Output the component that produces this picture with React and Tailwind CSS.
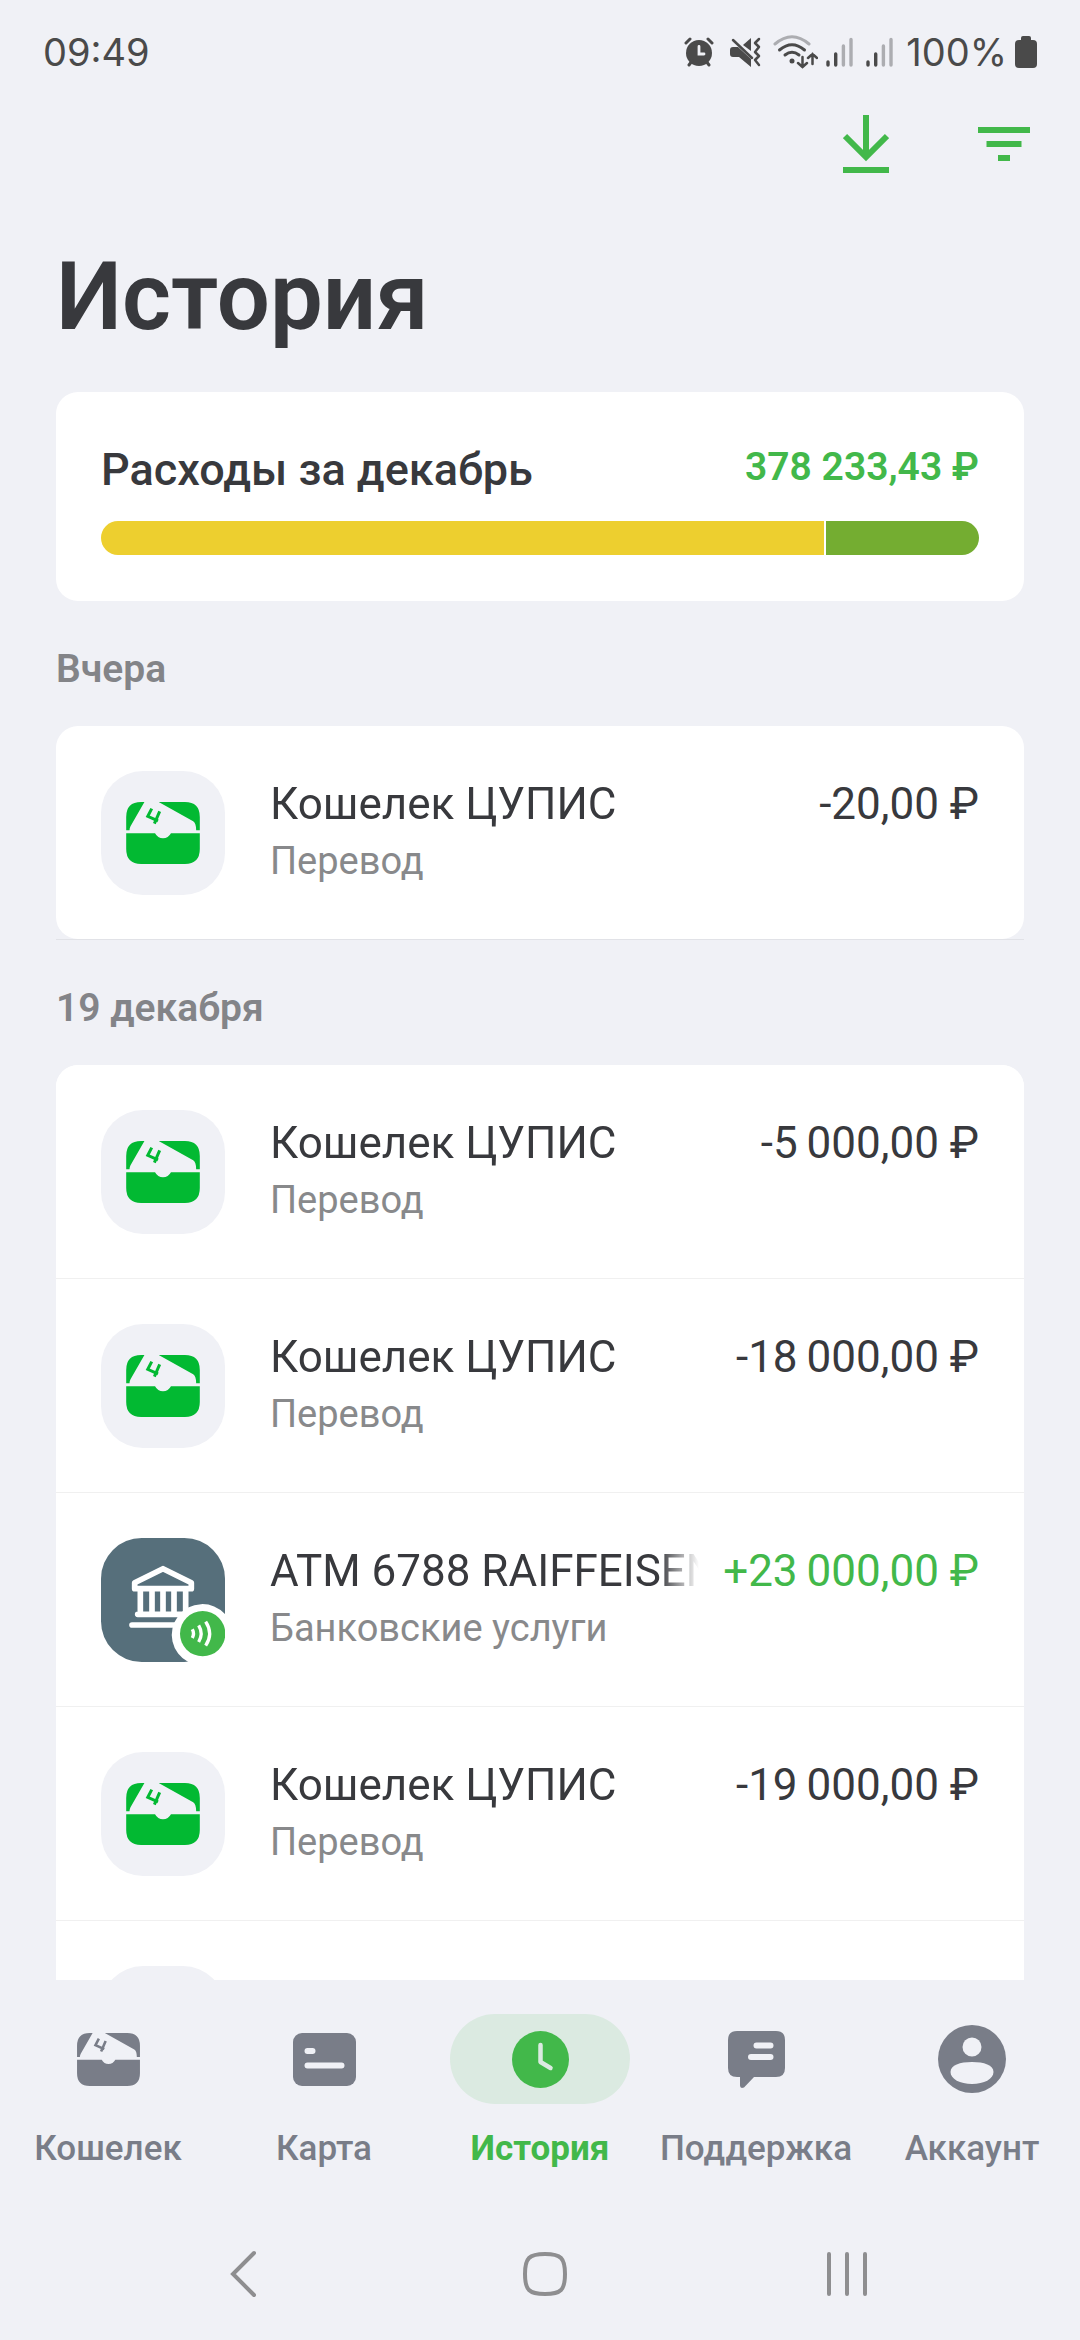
import clsx from 'clsx';

const categories = [
  { id: 'transfers', amount: 723, color: 'bg-[#edcf2f]' },
  { id: 'other', amount: 153, color: 'bg-[#74ad31]' },
];

// Thousands are separated with a thin space (\u2009)
const groups = [
  {
    label: 'Вчера',
    items: [{ id: 1, title: 'Кошелек ЦУПИС', category: 'Перевод', amount: '-20,00 ₽' }],
  },
  {
    label: '19 декабря',
    hasMore: true,
    items: [
      { id: 2, title: 'Кошелек ЦУПИС', category: 'Перевод', amount: '-5\u2009000,00 ₽' },
      { id: 3, title: 'Кошелек ЦУПИС', category: 'Перевод', amount: '-18\u2009000,00 ₽' },
      {
        id: 4,
        title: 'ATM 6788 RAIFFEISEN',
        category: 'Банковские услуги',
        amount: '+23\u2009000,00 ₽',
        type: 'bank',
        income: true,
      },
      { id: 5, title: 'Кошелек ЦУПИС', category: 'Перевод', amount: '-19\u2009000,00 ₽' },
    ],
  },
];

const AlarmIcon = () => (
  <svg className="w-[30px] h-[30px]" viewBox="0 0 30 30" fill="none" stroke="#4a4a4a" strokeWidth="3" strokeLinecap="round">
    <circle cx="15" cy="16" r="13" fill="#4a4a4a" stroke="none" />
    <path d="M2 6l4-4M28 6l-4-4M5 28l3-4M25 28l-3-4" />
    <path d="M15 9.500v7.500h5" stroke="#f0f1f6" strokeWidth="2.800" />
  </svg>
);

const MuteIcon = () => (
  <svg className="w-[31px] h-[30px]" viewBox="0 0 31 30" fill="#4a4a4a">
    <path d="M0 13q0-3 3-3h5l13 12v8L9 20H3q-3 0-3-3z" />
    <path d="M21 1v13l-8-6z" />
    <path d="M3 3l19 18" stroke="#4a4a4a" strokeWidth="2.500" strokeLinecap="round" />
    <path d="M29 2l-4 4 4 4-4 5 4 4-4 4 4 5" fill="none" stroke="#4a4a4a" strokeWidth="2.500" strokeLinecap="round" strokeLinejoin="round" />
  </svg>
);

const WifiIcon = () => (
  <svg className="w-[45px] h-[34px]" viewBox="0 0 45 34" fill="none" stroke="#4a4a4a" strokeWidth="3" strokeLinecap="round">
    <path d="M2 9q17-14.500 34 0" stroke="#acadb1" />
    <path d="M6.500 15q12.500-10.500 25 0M12 20q7-5.500 14 0" />
    <circle cx="19" cy="26" r="2.500" fill="#4a4a4a" stroke="none" />
    <path d="M29.500 22v10m-4.500-4l4.500 4 4.500-4M39.500 29V19m-4.500 4l4.500-4 4.500 4" strokeWidth="2.500" />
  </svg>
);

const SignalIcon = () => (
  <svg className="w-[28px] h-[30px]" viewBox="0 0 28 30" strokeWidth="3.400" strokeLinecap="round">
    <path d="M2 25v3M9.700 17v11" stroke="#4a4a4a" />
    <path d="M17.400 9v19M25 2.500V28" stroke="#acadb1" />
  </svg>
);

const BatteryIcon = () => (
  <svg className="w-[22px] h-[32px]" viewBox="0 0 22 32" fill="#4a4a4a">
    <rect x="6" y="0" width="10" height="8" rx="2" />
    <rect x="0" y="4" width="22" height="28" rx="4" />
  </svg>
);

const WalletIcon = ({ className }) => (
  <svg className={className} viewBox="0 0 222 187" fill="currentColor">
    <path d="M45 0h10L13 73q-3 6-3 12H0V45Q0 0 45 0z" />
    <path d="M98 0h79q45 0 45 45v40h-11q0-21-9-27z" />
    <path d="M0 94h87q8 15 24 15t24-15h87v48q0 45-45 45H45q-45 0-45-45z" />
    <path d="M77 20L65 43l31 14M101 28L85 65" fill="none" stroke="currentColor" strokeWidth="9" />
  </svg>
);

const BankIcon = () => (
  <svg className="size-[124px] shrink-0" viewBox="0 0 372 372">
    <rect width="372" height="372" rx="122" fill="#566f7b" />
    <g fill="none" stroke="#fff" strokeWidth="17" strokeLinecap="round" strokeLinejoin="round">
      <path d="M101 152v-18l85-42 85 42v18z" />
      <path d="M118 156v68M153 156v68M219 156v68M254 156v68M186 156v68M110 229h152M93 261h160" />
    </g>
    <path d="M372 228v144H262a92 92 0 1 1 110-144z" fill="#fff" />
    <circle cx="305" cy="287" r="68" fill="#42b84a" />
    <path d="M274 274q7 13 0 26M293 262q15 25 0 50M314 251q24 36 0 72" fill="none" stroke="#fff" strokeWidth="10" />
  </svg>
);

const CardIcon = () => (
  <svg className="w-[63px] h-[53px]" viewBox="0 0 63 53">
    <rect width="63" height="53" rx="9" fill="currentColor" />
    <path d="M14.500 18h5M14.500 32.500h34" stroke="#f0f1f6" strokeWidth="6" strokeLinecap="round" />
  </svg>
);

const ClockIcon = () => (
  <svg className="size-[57px]" viewBox="0 0 57 57">
    <circle cx="28.500" cy="28.500" r="28.500" fill="currentColor" />
    <path d="M28.500 14v17l10 6" fill="none" stroke="#dbeae1" strokeWidth="4.500" strokeLinecap="round" strokeLinejoin="round" />
  </svg>
);

const ChatIcon = () => (
  <svg className="size-[57px]" viewBox="0 0 57 57">
    <path d="M9 0h39q9 0 9 9v28q0 9-9 9H26L16 56.500q-4 1.500-4-2V46H9q-9 0-9-9V9q0-9 9-9z" fill="currentColor" />
    <path d="M28.500 14.500h14M23 26h19.500" stroke="#f0f1f6" strokeWidth="6" strokeLinecap="round" />
  </svg>
);

const AccountIcon = () => (
  <svg className="size-[68px]" viewBox="0 0 68 68">
    <circle cx="34" cy="34" r="34" fill="currentColor" />
    <circle cx="34" cy="22" r="9.500" fill="#f0f1f6" />
    <path d="M34 37c12 0 21.500 3 21.500 10S46 59 34 59s-21.500-5-21.500-12S22 37 34 37z" fill="#f0f1f6" />
  </svg>
);

const tabs = [
  { label: 'Кошелек', icon: <WalletIcon className="w-[63px] h-[53px]" /> },
  { label: 'Карта', icon: <CardIcon /> },
  { label: 'История', icon: <ClockIcon />, active: true },
  { label: 'Поддержка', icon: <ChatIcon /> },
  { label: 'Аккаунт', icon: <AccountIcon /> },
];

const StatusBar = () => (
  <div className="flex h-26 shrink-0 items-center justify-between px-[43px] font-[Inter,sans-serif] text-[38px] leading-[48px] text-[#4a4a4a]">
    <span>09:49</span>
    <div className="flex items-center">
      <AlarmIcon />
      <div className="ml-4">
        <MuteIcon />
      </div>
      <div className="ml-3">
        <WifiIcon />
      </div>
      <div className="ml-2 mr-3 flex gap-3">
        <SignalIcon />
        <SignalIcon />
      </div>
      <span className="mr-2">100%</span>
      <BatteryIcon />
    </div>
  </div>
);

const TransactionRow = ({ item, first, last }) => (
  <li className={clsx('border-b border-black/6', !last && 'bg-white', first && 'rounded-t-[22px]')}>
    <button
      className={clsx(
        'flex w-full items-start gap-[45px] bg-white px-[45px] pt-[45px] pb-[44px] text-left',
        first && 'rounded-t-[22px]',
        last && 'rounded-b-[22px]'
      )}
    >
      {item.type === 'bank' ? (
        <BankIcon />
      ) : (
        <span className="flex size-[124px] shrink-0 items-center justify-center rounded-[42px] bg-[#f0f1f6] text-[#02b932]">
          <WalletIcon className="w-[74px] h-[62px]" />
        </span>
      )}
      <span className="flex min-w-0 flex-1 flex-col gap-2 pt-[7px]">
        <span className="flex text-[44px] leading-[52px] text-[#38393d]">
          <span className="min-w-0 flex-1 overflow-hidden whitespace-nowrap [mask-image:linear-gradient(to_left,transparent,black_40px)]">
            {item.title}
          </span>
          <span className={clsx('ml-6 shrink-0 whitespace-nowrap', item.income && 'text-[#42b84a]')}>
            {item.amount}
          </span>
        </span>
        <span className="text-[38px] leading-[46px] text-[#88898b]">{item.category}</span>
      </span>
    </button>
  </li>
);

// Placeholder shown while the next page is loading
const LoadingRow = () => (
  <li className="bg-white px-[45px] pt-[45px] pb-[44px]" aria-hidden="true">
    <div className="size-[124px] rounded-[42px] bg-[#f0f1f6]" />
  </li>
);

const App = () => {
  return (
    <div className="flex h-screen flex-col bg-[#f0f1f6] font-[Roboto,sans-serif] text-[#38393d]">
      <StatusBar />

      <header className="flex h-20 shrink-0 justify-end gap-[58px] pr-9">
        <button aria-label="Скачать" className="flex size-20 items-center justify-center">
          <svg className="w-[46px] h-[58px]" viewBox="0 0 46 58" fill="none" stroke="#42b84a" strokeWidth="6">
            <path d="M23 0v42M2 21l21 21 21-21M0 55h46" />
          </svg>
        </button>
        <button aria-label="Фильтр" className="flex size-20 items-center justify-center">
          <svg className="w-[52px] h-[34px]" viewBox="0 0 52 34" stroke="#42b84a" strokeWidth="6">
            <path d="M0 3h52M8.500 17h35M20 31h12" />
          </svg>
        </button>
      </header>

      <main className="min-h-0 flex-1 overflow-y-auto px-14 [scrollbar-width:none]">
        <h1 className="pt-[57px] text-[94px] leading-[112px] font-semibold">История</h1>

        {/* Monthly expenses */}
        <section className="mt-[39px] rounded-[22px] bg-white px-[45px] pt-[52px] pb-[46px]">
          <div className="flex justify-between">
            <h2 className="text-[45px] leading-[52px] font-medium">Расходы за декабрь</h2>
            <span className="text-[39px] leading-[46px] font-semibold text-[#42b84a]">378 233,43 ₽</span>
          </div>
          <div className="mt-[25px] flex h-[34px] gap-[2px] overflow-hidden rounded-full">
            {categories.map((category) => (
              <div key={category.id} className={category.color} style={{ flexGrow: category.amount }} />
            ))}
          </div>
        </section>

        {/* Transactions by day */}
        {groups.map((group) => (
          <section key={group.label}>
            <h3 className="pt-[45px] pb-[34px] text-[39px] leading-[46px] font-semibold text-[#838488]">{group.label}</h3>
            <ul>
              {group.items.map((item, index) => (
                <TransactionRow
                  key={item.id}
                  item={item}
                  first={index === 0}
                  last={!group.hasMore && index === group.items.length - 1}
                />
              ))}
              {group.hasMore && <LoadingRow />}
            </ul>
          </section>
        ))}
      </main>

      <nav className="grid shrink-0 grid-cols-5 pt-[34px] pb-[38px]">
        {tabs.map((tab) => (
          <a
            key={tab.label}
            href="#"
            className={clsx(
              'flex flex-col items-center text-[35px] leading-[42px]',
              tab.active ? 'font-bold text-[#42b84a]' : 'font-medium text-[#797d88]'
            )}
          >
            <span
              className={clsx(
                'mb-6 flex h-[90px] w-[180px] items-center justify-center rounded-full',
                tab.active && 'bg-[#dbeae1]'
              )}
            >
              {tab.icon}
            </span>
            {tab.label}
          </a>
        ))}
      </nav>

      {/* System navigation */}
      <div className="grid h-33 shrink-0 grid-cols-3 pl-[92px] pr-[82px]">
        <button aria-label="Назад" className="flex items-center justify-center">
          <svg className="w-[28px] h-[48px]" viewBox="0 0 28 48" fill="none" stroke="#8e8e90" strokeWidth="4" strokeLinecap="round">
            <path d="M25 3L4 24l21 21" />
          </svg>
        </button>
        <button aria-label="Домой" className="flex items-center justify-center">
          <svg className="size-[46px]" viewBox="0 0 46 46" fill="none" stroke="#8e8e90" strokeWidth="4">
            <path d="M23 3c16 0 20 4 20 20s-4 20-20 20S3 39 3 23 7 3 23 3z" />
          </svg>
        </button>
        <button aria-label="Недавние" className="flex items-center justify-center">
          <svg className="w-[40px] h-[46px]" viewBox="0 0 40 46" stroke="#8e8e90" strokeWidth="4" strokeLinecap="round">
            <path d="M2 3v40M20 3v40M38 3v40" />
          </svg>
        </button>
      </div>
    </div>
  );
};

export default App;
